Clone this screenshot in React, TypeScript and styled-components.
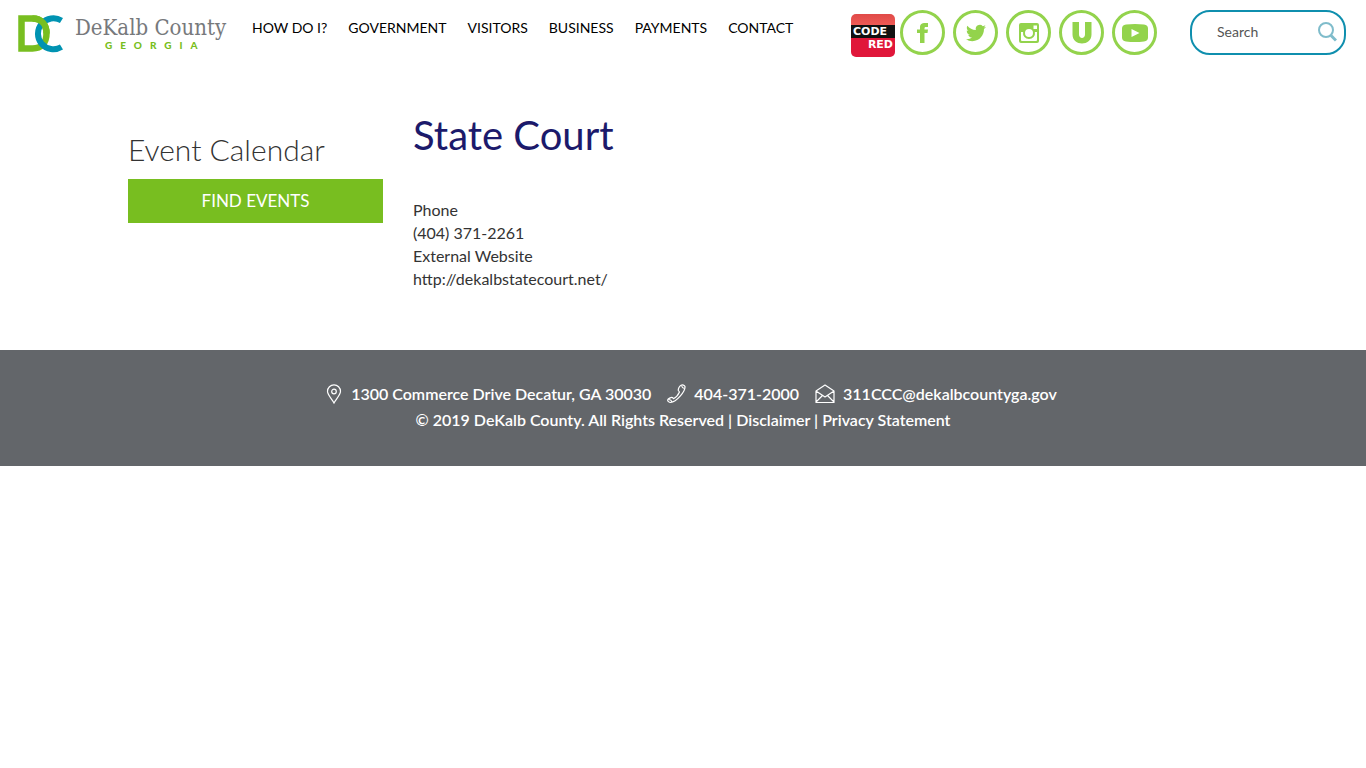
import React from "react";
import styled, { createGlobalStyle } from "styled-components";

const GlobalStyle = createGlobalStyle`
  *, *::before, *::after { box-sizing: border-box; }
  body {
    margin: 0;
    background: #fff;
    color: #333;
    font-family: Lato, "Open Sans", sans-serif;
    font-size: 16px;
    line-height: 23px;
  }
  a { color: inherit; text-decoration: none; }
`;

const Header = styled.header`
  display: flex;
  align-items: flex-start;
  padding: 10px 20px 0 18px;
`;

const Brand = styled.a`
  display: flex;
  gap: 12px;
  width: 234px;
  padding-top: 5px;
`;

const BrandText = styled.span`
  display: flex;
  flex-direction: column;
  white-space: nowrap;
`;

const BrandName = styled.span`
  font-family: "DejaVu Serif Condensed", "DejaVu Serif", serif;
  font-stretch: condensed;
  font-size: 22px;
  line-height: 26px;
  color: #77797c;
`;

const BrandState = styled.span`
  padding-left: 30px;
  font-size: 10px;
  font-weight: 900;
  line-height: 9px;
  letter-spacing: 8px;
  color: #78be20;
`;

const NavList = styled.ul`
  display: flex;
  gap: 21px;
  margin: 0;
  padding: 8px 0 0;
  list-style: none;
  line-height: 20px;
`;

const NavLink = styled.a`
  display: block;
  font-size: 14px;
  color: #000;
  white-space: nowrap;
`;

const Social = styled.div`
  display: flex;
  gap: 8px;
  margin-left: auto;
`;

const Circle = styled.a`
  display: flex;
  align-items: center;
  justify-content: center;
  width: 45px;
  height: 45px;
  border: 3px solid #93d34c;
  border-radius: 50%;
  color: #93d34c;
`;

const CodeRedLink = styled.a`
  display: flex;
  flex-direction: column;
  width: 44px;
  height: 43px;
  margin: 4px -3px 0 0;
  padding-top: 11px;
  border-radius: 5px;
  background: linear-gradient(#e04a48, #ee5a55 25%, #e0173a 55%);
  color: #fff;
  font-family: "DejaVu Sans", sans-serif;
  font-size: 11px;
  font-weight: 700;
  line-height: 13px;
  overflow: hidden;
`;

const CodeWord = styled.span`
  padding-left: 2px;
  background: #111;
`;

const RedWord = styled.span`
  padding-right: 2px;
  text-align: right;
`;

const SearchForm = styled.form`
  display: flex;
  align-items: center;
  width: 156px;
  height: 45px;
  margin-left: 33px;
  padding: 0 7px 2px 25px;
  border: 2px solid #0f8fae;
  border-radius: 20px;
`;

const SearchInput = styled.input`
  flex: 1;
  min-width: 0;
  padding: 0;
  border: 0;
  outline: 0;
  background: transparent;
  font: inherit;
  font-size: 14px;
  color: #555;
  &::placeholder { color: #555; opacity: 1; }
`;

const SearchButton = styled.button`
  display: flex;
  padding: 0;
  border: 0;
  background: transparent;
  color: #7fbccb;
`;

const Main = styled.main`
  display: flex;
  gap: 30px;
  max-width: 1140px;
  margin: 0 auto;
  padding: 55px 15px 60px;
`;

const Sidebar = styled.aside`
  width: 255px;
  padding-top: 19px;
`;

const SideTitle = styled.h2`
  margin: 0 0 12px;
  font-size: 30px;
  font-weight: 300;
  line-height: 36px;
`;

const FindButton = styled.button`
  display: block;
  width: 100%;
  height: 44px;
  padding: 0 0 2px;
  border: 0;
  background: #78be20;
  color: #fff;
  font: inherit;
  font-size: 17px;
`;

const Content = styled.section`
  flex: 1;
`;

const Title = styled.h1`
  margin: 0 0 40px;
  font-size: 40px;
  font-weight: 400;
  line-height: 46px;
  color: #1c1a6b;
`;

const Details = styled.dl`
  margin: 0;
`;

const Line = styled.dt``;

const Value = styled.dd`
  margin: 0;
`;

const Footer = styled.footer`
  padding: 31px 20px 33px;
  background: #63666a;
  color: #fff;
  font-weight: 600;
  text-align: center;
`;

const Contacts = styled.address`
  display: flex;
  justify-content: center;
  gap: 16px;
  padding-left: 16px;
  font-style: normal;
  line-height: 26px;
`;

const Contact = styled.a`
  display: flex;
  align-items: center;
  gap: 8px;
`;

const Legal = styled.p`
  margin: 0;
  line-height: 26px;
`;

const Logo = () => (
  <svg width="45" height="38" viewBox="0 0 45 38" fill="none" aria-hidden="true">
    <path d="M3.500 3.500h11c9 0 14 6 14 15s-5 15-14 15h-11z" stroke="#78be20" strokeWidth="6.500" />
    <path d="M43.500 5.500A15.500 15.500 0 1 0 43.500 32" stroke="#0093b2" strokeWidth="6" />
    <path d="M14.500 3.500c9 0 14 6 14 15" stroke="#78be20" strokeWidth="6.500" />
  </svg>
);

const Facebook = () => (
  <svg width="12" height="22" viewBox="0 0 12 22" fill="currentColor" aria-hidden="true">
    <path d="M3 21V11H0V7.500h3V5.500C3 2 5 1 8 1h3v4H9C7.500 5 7.500 5.500 7.500 7.500H11L10.500 11h-3v10z" />
  </svg>
);

const Twitter = () => (
  <svg width="20" height="20" viewBox="0 0 24 24" fill="currentColor" aria-hidden="true">
    <path d="M23.950 4.570a10 10 0 0 1-2.820.770 4.960 4.960 0 0 0 2.160-2.720c-.950.550-2 .950-3.130 1.180a4.920 4.920 0 0 0-8.380 4.480C7.690 8.090 4.070 6.130 1.640 3.160a4.820 4.820 0 0 0-.670 2.480c0 1.710.870 3.210 2.190 4.090a4.900 4.900 0 0 1-2.230-.610v.060a4.920 4.920 0 0 0 3.950 4.830 5 5 0 0 1-2.210.080 4.940 4.940 0 0 0 4.600 3.420A9.870 9.870 0 0 1 0 19.540a14 14 0 0 0 7.550 2.210c9.050 0 14-7.500 14-13.980 0-.210 0-.420-.020-.630a9.940 9.940 0 0 0 2.460-2.550z" />
  </svg>
);

const Instagram = () => (
  <svg width="20" height="20" viewBox="0 0 20 20" aria-hidden="true">
    <path fill="currentColor" fillRule="evenodd" d="M2 0h16q2 0 2 2v16q0 2-2 2H2q-2 0-2-2V2q0-2 2-2zM2 9v8q0 1 1 1h14q1 0 1-1V9h-2.100a6 6 0 1 1-11.800 0zM14.500 2.500V6H18V2.500zM10 6a4 4 0 1 0 0 8 4 4 0 0 0 0-8z" />
  </svg>
);

const UMark = () => (
  <svg width="20" height="22" viewBox="0 0 20 22" fill="currentColor" aria-hidden="true">
    <path d="M.500 0h6.500v12.500c0 4.500 6 4.500 6 0V0h6.500v12.500c0 12-19 12-19 0z" />
  </svg>
);

const YouTube = () => (
  <svg width="26" height="18" viewBox="0 0 26 18" aria-hidden="true">
    <path fill="currentColor" fillRule="evenodd" d="M4 .500Q13-.500 22 .500q4 .500 4 4v9q0 3.500-4 4-9 1-18 0-4-.500-4-4v-9q0-3.500 4-4zM9.500 5v8l8-4z" />
  </svg>
);

const Magnifier = () => (
  <svg width="19" height="20" viewBox="0 0 19 20" fill="none" stroke="currentColor" aria-hidden="true">
    <circle cx="8" cy="8" r="7" strokeWidth="2" />
    <path d="M13 13.500l5 5" strokeWidth="3" />
  </svg>
);

const Pin = () => (
  <svg width="18" height="20" viewBox="0 0 18 20" fill="none" stroke="currentColor" strokeWidth="1.200" aria-hidden="true">
    <path d="M9 19C7 15 2.500 11 2.500 7.300a6.500 6.500 0 0 1 13 0C15.500 11 11 15 9 19z" />
    <circle cx="9" cy="7.500" r="2.300" />
  </svg>
);

const Phone = () => (
  <svg width="19" height="20" viewBox="0 0 19 20" fill="none" stroke="currentColor" strokeWidth="1.200" strokeLinejoin="round" aria-hidden="true">
    <path d="M14 1.200c1.500-.700 3.500 0 4 1.300.500 5-8.500 15.500-14.500 16-1.500 0-3-1.500-2.800-2.500.300-1.200 3.300-3 4.800-2.500l1 1.200c2-1 5-4.500 6-6.700l-1.200-1.500c-.300-1.500 1.200-4.600 2.700-5.300z" />
    <path d="M1.500 15.500c1.500 0 3 1 3.500 2.500M14.500 1.500c.300 1.500 1.200 2.600 3 3" />
  </svg>
);

const Mail = () => (
  <svg width="20" height="20" viewBox="0 0 20 20" fill="none" stroke="currentColor" strokeWidth="1.200" strokeLinejoin="round" aria-hidden="true">
    <path d="M1 7l9-6 9 6v11.500H1zM1 7l9 6 9-6M1 18l6.500-6.500M19 18l-6.500-6.500" />
  </svg>
);

const navItems = ["HOW DO I?", "GOVERNMENT", "VISITORS", "BUSINESS", "PAYMENTS", "CONTACT"];

const socialItems = [
  { label: "Facebook", Icon: Facebook },
  { label: "Twitter", Icon: Twitter },
  { label: "Instagram", Icon: Instagram },
  { label: "UStream", Icon: UMark },
  { label: "YouTube", Icon: YouTube },
];

export default function App() {
  return (
    <>
      <GlobalStyle />
      <Header>
        <Brand href="#">
          <Logo />
          <BrandText>
            <BrandName>DeKalb County</BrandName>
            <BrandState>GEORGIA</BrandState>
          </BrandText>
        </Brand>
        <nav>
          <NavList>
            {navItems.map((item) => (
              <li key={item}>
                <NavLink href="#">{item}</NavLink>
              </li>
            ))}
          </NavList>
        </nav>
        <Social>
          <CodeRedLink href="#">
            <CodeWord>CODE</CodeWord>
            <RedWord>RED</RedWord>
          </CodeRedLink>
          {socialItems.map(({ label, Icon }) => (
            <Circle key={label} href="#" aria-label={label}>
              <Icon />
            </Circle>
          ))}
        </Social>
        <SearchForm role="search">
          <SearchInput type="text" placeholder="Search" aria-label="Search" />
          <SearchButton type="button" aria-label="Submit search">
            <Magnifier />
          </SearchButton>
        </SearchForm>
      </Header>
      <Main>
        <Sidebar>
          <SideTitle>Event Calendar</SideTitle>
          <FindButton type="button">FIND EVENTS</FindButton>
        </Sidebar>
        <Content>
          <Title>State Court</Title>
          <Details>
            <Line>Phone</Line>
            <Value>(404) 371-2261</Value>
            <Line>External Website</Line>
            <Value>
              <a href="#">http://dekalbstatecourt.net/</a>
            </Value>
          </Details>
        </Content>
      </Main>
      <Footer>
        <Contacts>
          <Contact href="#">
            <Pin />
            1300 Commerce Drive Decatur, GA 30030
          </Contact>
          <Contact href="#">
            <Phone />
            404-371-2000
          </Contact>
          <Contact href="#">
            <Mail />
            311CCC@dekalbcountyga.gov
          </Contact>
        </Contacts>
        <Legal>
          © 2019 DeKalb County. All Rights Reserved | <a href="#">Disclaimer</a> | <a href="#">Privacy Statement</a>
        </Legal>
      </Footer>
    </>
  );
}
